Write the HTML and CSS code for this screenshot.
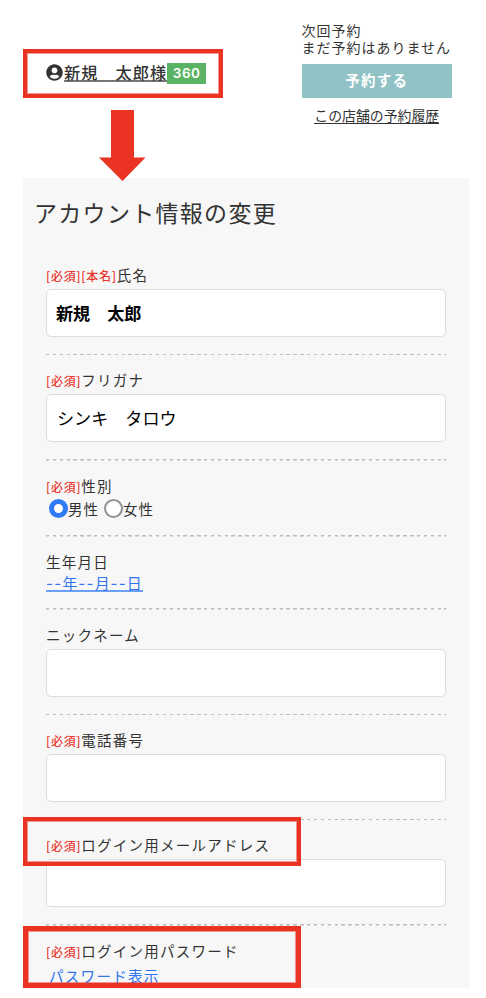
FILE: index.html
```html
<!DOCTYPE html>
<html lang="ja">
<head>
  <meta charset="UTF-8">
  <meta name="viewport" content="width=device-width, initial-scale=1.0">
  <title>アカウント情報の変更</title>
  <link rel="stylesheet" href="styles.css">
</head>
<body>
  <div class="page">
    <header class="header">
      <div class="user">
        <svg class="user-icon" viewBox="0 0 496 512"><path fill="#333" d="M248 8C111 8 0 119 0 256s111 248 248 248 248-111 248-248S385 8 248 8zm0 96c48.600 0 88 39.400 88 88s-39.400 88-88 88-88-39.400-88-88 39.400-88 88-88zm0 344c-58.700 0-111.300-26.600-146.500-68.200 18.800-35.400 55.600-59.800 98.500-59.800 2.400 0 4.800.4 7.100 1.100 13 4.200 26.600 6.900 40.900 6.900s28-2.700 40.900-6.900c2.300-.7 4.700-1.100 7.100-1.100 42.900 0 79.700 24.400 98.500 59.800C359.300 421.400 306.700 448 248 448z"/></svg>
        <a class="user-name">新規　太郎様</a>
        <span class="badge">360</span>
      </div>
      <div class="booking">
        <p>次回予約</p>
        <p>まだ予約はありません</p>
        <button class="book-btn">予約する</button>
        <a class="history">この店舗の予約履歴</a>
      </div>
    </header>

    <main class="panel">
      <h1>アカウント情報の変更</h1>
      <form class="form">
        <div class="row">
          <label><span class="req">[必須][本名]</span>氏名</label>
          <input class="bold" type="text" value="新規　太郎">
        </div>
        <div class="row">
          <label><span class="req">[必須]</span>フリガナ</label>
          <input type="text" value="シンキ　タロウ">
        </div>
        <div class="row row-gender">
          <label><span class="req">[必須]</span>性別</label>
          <div class="radios">
            <span class="radio checked"></span><span class="radio-text">男性</span>
            <span class="radio"></span><span class="radio-text">女性</span>
          </div>
        </div>
        <div class="row row-birth">
          <label>生年月日</label>
          <a class="date"><span>--</span>年<span>--</span>月<span>--</span>日</a>
        </div>
        <div class="row">
          <label>ニックネーム</label>
          <input type="text">
        </div>
        <div class="row">
          <label><span class="req">[必須]</span>電話番号</label>
          <input type="text">
        </div>
        <div class="row">
          <label><span class="req">[必須]</span>ログイン用メールアドレス</label>
          <input type="text">
        </div>
        <div class="row">
          <label><span class="req">[必須]</span>ログイン用パスワード</label>
          <a class="show-pass">パスワード表示</a>
        </div>
      </form>
    </main>

    <!-- callouts drawn over the page -->
    <div class="mark mark-user"></div>
    <svg class="arrow" viewBox="0 0 47 71"><path fill="#ea3323" d="M12 0h23v47.500h11.500L23.500 71 0 47.500h12z"/></svg>
    <div class="mark mark-mail"></div>
    <div class="mark mark-pass"></div>
  </div>
</body>
</html>
```

FILE: styles.css
```css
* {
  margin: 0;
  padding: 0;
  box-sizing: border-box;
}

body {
  background: #fff;
  color: #333;
  font-family: "Noto Sans CJK JP", sans-serif;
}

.page {
  position: relative;
  width: 486px;
  height: 998px;
  overflow: hidden;
}

.header {
  display: flex;
  justify-content: space-between;
  height: 178px;
  padding: 22px 34px 0 46px;
}

.user {
  display: flex;
  align-items: center;
  height: 21px;
  margin-top: 41px;
}

.user-icon {
  width: 17px;
  height: 17px;
  margin-right: 1px;
  margin-bottom: 3px;
}

.user-name {
  height: 19px;
  margin-bottom: 3px;
  border-bottom: 2px solid #777;
  font-size: 16.2px;
  font-weight: 500;
  letter-spacing: 1px;
  line-height: 18px;
  white-space: nowrap;
}

.badge {
  width: 39px;
  height: 21px;
  background: #5ab364;
  color: #fff;
  font: 600 13.5px/21px Inter, sans-serif;
  letter-spacing: 0.5px;
  text-align: center;
}

.booking {
  display: flex;
  flex-direction: column;
  width: 150.5px;
  font-size: 14px;
  letter-spacing: 1px;
  line-height: 17px;
  white-space: nowrap;
}

.book-btn {
  height: 34px;
  margin-top: 8px;
  border: none;
  background: #91c2c6;
  color: #fff;
  font: 700 14.5px/32px "Noto Sans CJK JP", sans-serif;
  letter-spacing: 1.2px;
  padding-bottom: 2px;
}

.history {
  align-self: center;
  height: 17px;
  margin-top: 9px;
  border-bottom: 1px solid #333;
  font-size: 13.9px;
  letter-spacing: 0;
}

.panel {
  width: 446px;
  height: 810px;
  margin-left: 23px;
  padding: 18px 23px 0;
  background: #f7f7f7;
  overflow: hidden;
}

h1 {
  height: 54px;
  margin-left: -12px;
  font-size: 23px;
  font-weight: 400;
  letter-spacing: 1.3px;
  line-height: 32px;
}

.row {
  display: flex;
  flex-direction: column;
  align-items: flex-start;
  height: 105.3px;
  padding-top: 15px;
  background: repeating-linear-gradient(90deg, #bbb 0 3.4px, transparent 3.4px 6.87px) 0 100% / 100% 1.5px no-repeat;
}

label {
  height: 20px;
  margin-bottom: 4px;
  font-size: 14.5px;
  letter-spacing: 1.25px;
  line-height: 20px;
  white-space: nowrap;
}

.req {
  color: #e8382f;
  font-size: 12px;
  font-weight: 500;
  letter-spacing: 0.7px;
}

input {
  width: 400px;
  height: 48px;
  padding: 0 10px 1px;
  border: 1px solid #ddd;
  border-radius: 5px;
  background: #fff;
  color: #000;
  font: 400 17.1px "Noto Sans CJK JP", sans-serif;
}

input.bold {
  padding-left: 9px;
  font-weight: 700;
}

.row-gender {
  height: 76px;
}

.radios {
  display: flex;
  align-items: center;
  height: 18px;
  padding-left: 3px;
  font-size: 14.5px;
  letter-spacing: 1px;
  line-height: 20px;
}

.radio {
  width: 19px;
  height: 19px;
  border: 2px solid #929292;
  border-radius: 50%;
  background: #fff;
}

.radio.checked {
  border: 5px solid #2f7bf6;
}

.radio-text {
  margin-right: 5px;
}

.row-birth {
  height: 73.3px;
}

.date {
  height: 17px;
  margin-top: -1px;
  border-bottom: 2px solid #6b9ff8;
  color: #2f74f0;
  font-size: 15px;
  letter-spacing: 0.8px;
  line-height: 16px;
}

.date span {
  font-family: Inter, sans-serif;
  letter-spacing: 1.3px;
}

.show-pass {
  margin-left: 3px;
  color: #2f74f0;
  font-size: 14.6px;
  letter-spacing: 1.2px;
  line-height: 22px;
}

.mark {
  position: absolute;
  left: 23px;
  width: 278px;
  height: 49px;
  border: 4px solid #ea3323;
  box-shadow: inset 0 0 0 1px rgba(234, 51, 35, 0.5);
}

.mark-user {
  top: 49px;
  width: 200px;
}

.mark-mail {
  top: 817px;
}

.mark-pass {
  top: 926px;
  height: 62px;
  border-width: 5px;
}

.arrow {
  position: absolute;
  left: 99px;
  top: 110px;
  width: 47px;
  height: 71px;
}
```
